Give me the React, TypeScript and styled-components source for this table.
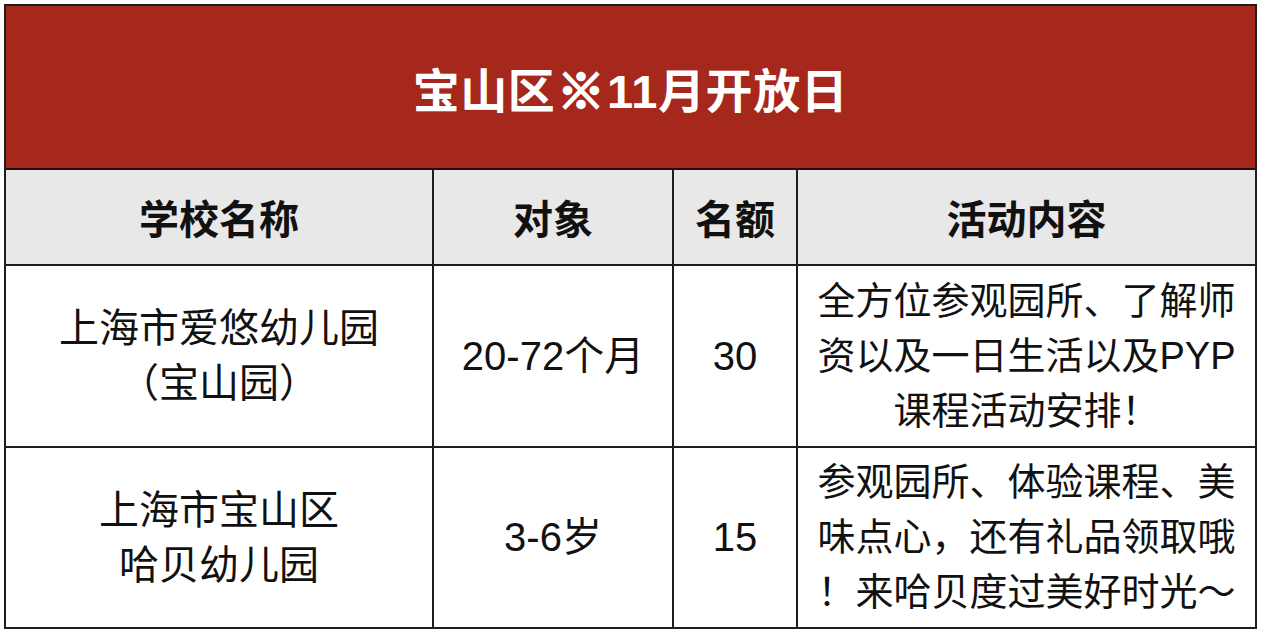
import React from 'react';
import styled, { createGlobalStyle } from 'styled-components';

const GlobalStyle = createGlobalStyle`
  html, body {
    margin: 0;
    padding: 0;
    background: #ffffff;
  }
  body {
    font-family: "Liberation Sans", "Noto Sans CJK SC", sans-serif;
    color: #111111;
  }
`;

const Page = styled.div`
  padding: 4px 0 0 4px;
`;

const Table = styled.div`
  display: grid;
  grid-template-columns: 428px 240px 124px 459px;
  grid-template-rows: 164px 96px 182px 181px;
  width: 1253px;
  box-sizing: border-box;
  border-left: 2px solid #1e1e1e;
  border-top: 2px solid #1e1e1e;
`;

const Cell = styled.div<{ $bg?: string }>`
  display: flex;
  align-items: center;
  justify-content: center;
  text-align: center;
  box-sizing: border-box;
  border-right: 2px solid #1e1e1e;
  border-bottom: 2px solid #1e1e1e;
  background: ${(p) => p.$bg || '#ffffff'};
`;

const TitleCell = styled(Cell)`
  grid-column: 1 / -1;
  background: #a6271c;
  border-bottom-color: #2a0c08;
`;

const Title = styled.div`
  color: #ffffff;
  font-size: 47px;
  font-weight: 700;
  letter-spacing: 0.6px;
`;

const Mark = styled.span`
  -webkit-text-stroke: 2.5px #ffffff;
  margin: 0 2px;
`;

const HeadText = styled.div`
  font-size: 40px;
  font-weight: 700;
  color: #111111;
`;

const BodyText = styled.div<{ $size?: number }>`
  font-size: ${(p) => p.$size || 40}px;
  line-height: 55px;
  font-weight: 400;
  color: #111111;
  white-space: pre-line;
`;

type Row = {
  name: string;
  target: string;
  count: string;
  content: string;
};

const rows: Row[] = [
  {
    name: '上海市爱悠幼儿园\n（宝山园）',
    target: '20-72个月',
    count: '30',
    content: '全方位参观园所、了解师\n资以及一日生活以及PYP\n课程活动安排！',
  },
  {
    name: '上海市宝山区\n哈贝幼儿园',
    target: '3-6岁',
    count: '15',
    content: '参观园所、体验课程、美\n味点心，还有礼品领取哦\n！来哈贝度过美好时光～',
  },
];

const headers = ['学校名称', '对象', '名额', '活动内容'];

const App: React.FC = () => {
  return (
    <Page>
      <GlobalStyle />
      <Table>
        <TitleCell>
          <Title>
            宝山区<Mark>※</Mark>11月开放日
          </Title>
        </TitleCell>
        {headers.map((h) => (
          <Cell key={h} $bg="#e8e8e8">
            <HeadText>{h}</HeadText>
          </Cell>
        ))}
        {rows.map((r) => (
          <React.Fragment key={r.name}>
            <Cell>
              <BodyText>{r.name}</BodyText>
            </Cell>
            <Cell>
              <BodyText>{r.target}</BodyText>
            </Cell>
            <Cell>
              <BodyText>{r.count}</BodyText>
            </Cell>
            <Cell>
              <BodyText $size={38}>{r.content}</BodyText>
            </Cell>
          </React.Fragment>
        ))}
      </Table>
    </Page>
  );
};

export default App;
